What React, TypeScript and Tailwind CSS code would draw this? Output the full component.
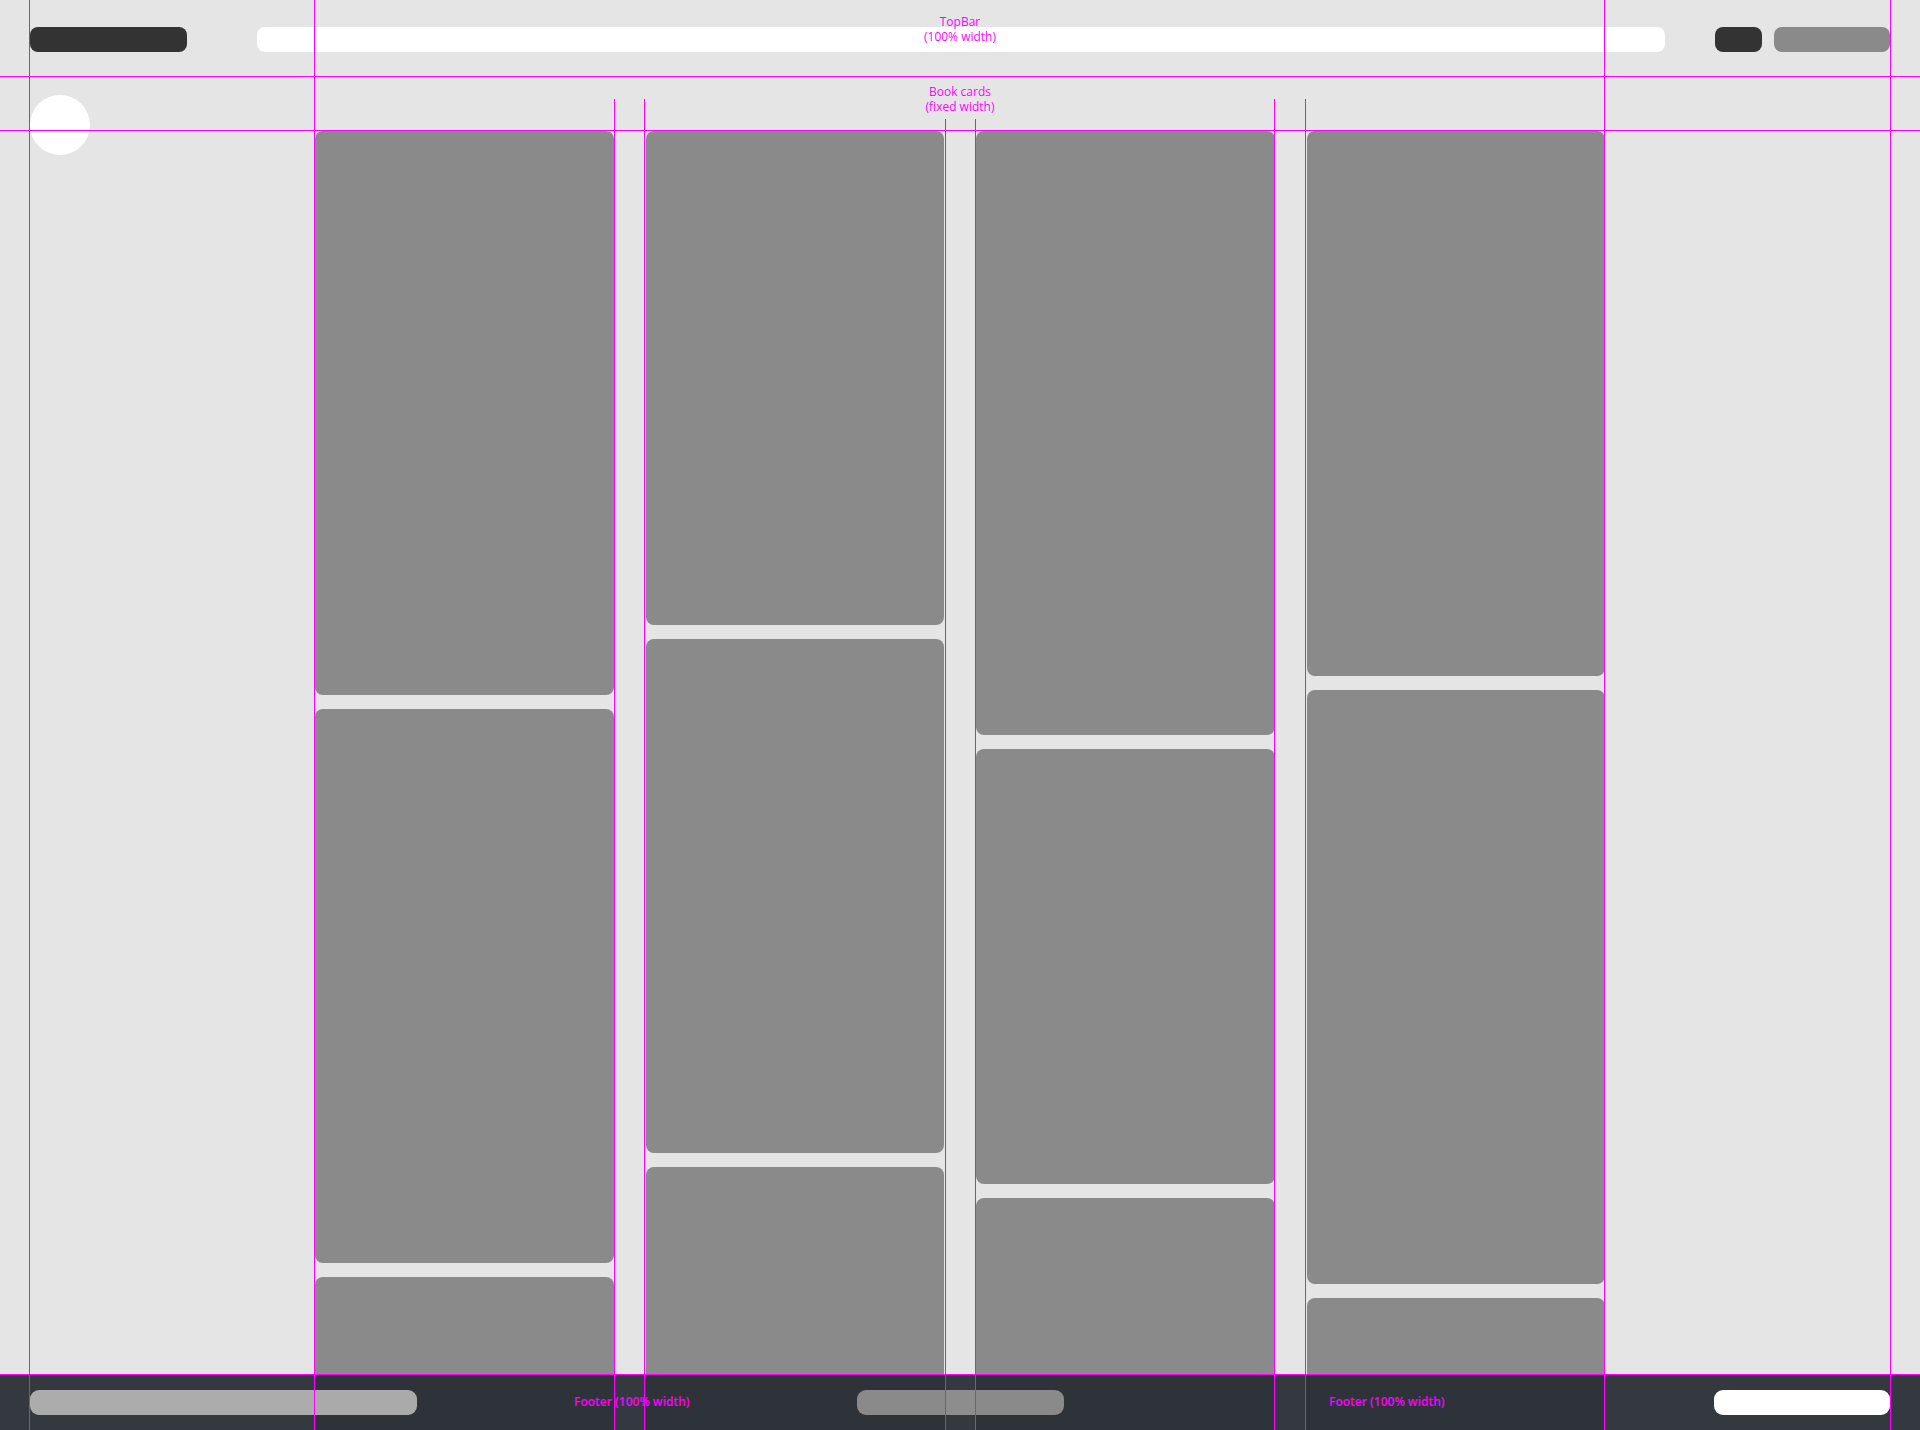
const columns: number[][] = [
  [564, 554, 520],
  [494, 514, 520],
  [604, 435, 520],
  [545, 594, 520],
];

const fullLines = [29, 314, 1604, 1890];
const shortLines = [
  { x: 614, top: 99 },
  { x: 644, top: 99 },
  { x: 1274, top: 99 },
  { x: 1305, top: 99 },
  { x: 945, top: 119 },
  { x: 975, top: 119 },
];
const rowLines = [76, 130, 1374];

function TopBar() {
  return (
    <header className="h-[76px] shrink-0 flex items-start pt-[27px] px-[30px]">
      <div className="w-[157px] h-[25px] rounded-[8px] bg-[#333333]" />
      <div className="flex-1 h-[25px] ml-[70px] rounded-[8px] bg-white" />
      <div className="w-[47px] h-[25px] ml-[50px] rounded-[8px] bg-[#333333]" />
      <div className="w-[116px] h-[25px] ml-[12px] rounded-[8px] bg-[#8a8a8a]" />
    </header>
  );
}

function BookCard({ height }: { height: number }) {
  return <div className="w-full shrink-0 rounded-lg bg-[#8a8a8a]" style={{ height }} />;
}

function Footer() {
  return (
    <footer className="h-[56px] shrink-0 grid grid-cols-[1fr_auto_1fr] items-center px-[30px] bg-[#2e333a]">
      <div className="w-[387px] h-[25px] rounded-[9px] bg-[#aaaaaa]" />
      <div className="w-[207px] h-[25px] rounded-[9px] bg-[#8a8a8a]" />
      <div className="justify-self-end w-[176px] h-[25px] rounded-[9px] bg-white" />
    </footer>
  );
}

function Guides() {
  return (
    <div className="absolute inset-0 pointer-events-none font-['Open_Sans',sans-serif] text-[#ff00ff]">
      {/* lighter tint in footer outside the card columns */}
      <div className="absolute top-[1374px] bottom-0 left-0 w-[314px] bg-white/[0.03]" />
      <div className="absolute top-[1374px] bottom-0 left-[614px] w-[30px] bg-white/[0.03]" />
      <div className="absolute top-[1374px] bottom-0 left-[945px] w-[30px] bg-white/[0.03]" />
      <div className="absolute top-[1374px] bottom-0 left-[1274px] w-[31px] bg-white/[0.03]" />
      <div className="absolute top-[1374px] bottom-0 left-[1605px] right-0 bg-white/[0.03]" />

      {rowLines.map((y) => (
        <div key={y} className="absolute left-0 right-0 h-px bg-[#ff00ff]" style={{ top: y }} />
      ))}
      {fullLines.map((x) => (
        <div key={x} className="absolute top-0 bottom-0 w-px bg-[#ff00ff]" style={{ left: x }} />
      ))}
      {shortLines.map((l) => (
        <div key={l.x} className="absolute bottom-0 w-px bg-[#ff00ff]" style={{ left: l.x, top: l.top }} />
      ))}

      <div className="absolute top-[14px] left-[860px] w-[200px] text-center text-[12px] leading-[15px]">
        TopBar
        <br />
        (100% width)
      </div>
      <div className="absolute top-[84px] left-[860px] w-[200px] text-center text-[12px] leading-[15px]">
        Book cards
        <br />
        (fixed width)
      </div>
      <div className="absolute top-[1394px] left-[574px] text-[12px] leading-[16px] font-semibold whitespace-nowrap">
        Footer (100% width)
      </div>
      <div className="absolute top-[1394px] left-[1329px] text-[12px] leading-[16px] font-semibold whitespace-nowrap">
        Footer (100% width)
      </div>
    </div>
  );
}

export default function App() {
  return (
    <div className="relative w-[1920px] h-[1430px] flex flex-col overflow-hidden bg-[#e5e5e5]">
      <TopBar />

      <main className="flex-1 min-h-0 overflow-hidden grid grid-cols-[1fr_1290px_1fr]">
        <div className="pl-[30px] pt-[19px]">
          <div className="w-[60px] h-[60px] rounded-full bg-white" />
        </div>

        <div className="grid grid-cols-4 gap-8 pt-[55px] items-start">
          {columns.map((heights, i) => (
            <div key={i} className="flex flex-col gap-[14px]">
              {heights.map((h, j) => (
                <BookCard key={j} height={h} />
              ))}
            </div>
          ))}
        </div>

        <div />
      </main>

      <Footer />
      <Guides />
    </div>
  );
}
